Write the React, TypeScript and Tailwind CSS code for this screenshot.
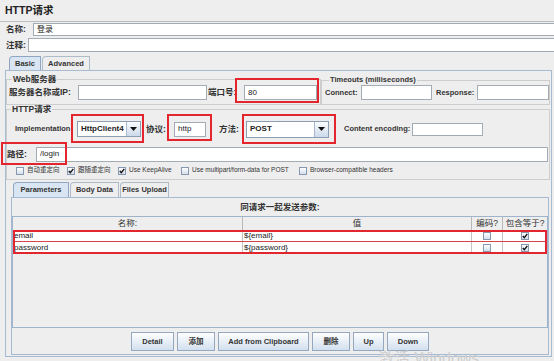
import React from "react";

type Kids = { className?: string; children?: React.ReactNode };

// red annotation frame drawn over a control
function Red({ className = "" }: { className?: string }) {
  return <span className={`pointer-events-none absolute border-2 border-[#e3262d] ${className}`} />;
}

function Input({ className = "", children }: Kids) {
  return (
    <div
      className={`flex items-center border border-[#a3abb5] bg-white px-[3px] text-[8px] leading-none text-[#222] ${className}`}
    >
      {children}
    </div>
  );
}

function Combo({ value, className = "" }: { value: string; className?: string }) {
  return (
    <div className={`flex border border-[#8d9db3] bg-white ${className}`}>
      <div className="flex flex-1 items-center pl-[3px] text-[8px] font-bold leading-none text-[#222]">{value}</div>
      <div className="flex w-[14px] items-center justify-center border-l border-[#a9b8ca] bg-linear-to-b from-[#fbfdff] to-[#ccdaea]">
        <svg width="7" height="4" viewBox="0 0 7 4">
          <path d="M0 0h7L3.5 4z" fill="#111" />
        </svg>
      </div>
    </div>
  );
}

function Box({ checked }: { checked?: boolean }) {
  return (
    <span className="flex h-[8px] w-[8px] shrink-0 items-center justify-center border border-[#8797ad] bg-linear-to-b from-[#ffffff] to-[#d3dfec]">
      {checked && (
        <svg width="6" height="6" viewBox="0 0 6 6">
          <path d="M0.8 3.1 L2.3 4.7 L5.3 0.9" stroke="#111" strokeWidth="1.4" fill="none" />
        </svg>
      )}
    </span>
  );
}

function Check({ label, checked, className = "" }: { label: string; checked?: boolean; className?: string }) {
  return (
    <div className={`flex items-center gap-[3px] ${className}`}>
      <Box checked={checked} />
      <span className="text-[6.5px] leading-none text-[#333]">{label}</span>
    </div>
  );
}

function Tab({ label, active, className = "" }: { label: string; active?: boolean; className?: string }) {
  return (
    <div
      className={`flex h-full items-center justify-center rounded-tl-[4px] border border-b-0 text-[7.5px] font-bold leading-none text-[#333] ${
        active ? "border-[#8ea6c1] bg-[#d9e5f2]" : "border-[#aebbc9] bg-[#eeeeee]"
      } ${className}`}
    >
      {label}
    </div>
  );
}

function Btn({ label, className = "" }: { label: string; className?: string }) {
  return (
    <div
      className={`flex h-[19px] items-center justify-center border border-[#96a8bf] bg-linear-to-b from-[#fdfeff] to-[#d3e0ee] text-[7.5px] font-bold leading-none text-[#333] ${className}`}
    >
      {label}
    </div>
  );
}

const rows = [
  { name: "email", value: "${email}" },
  { name: "password", value: "${password}" },
];

export default function App() {
  return (
    <div className="relative h-[361px] w-[554px] overflow-hidden bg-[#eeeeee] font-[family-name:'Liberation_Sans','Noto_Sans_CJK_SC',sans-serif] text-[#333]">
      <div className="h-[22px] border-b border-[#bdbdbd] pl-[5px] pt-[4px] text-[10.5px] font-bold leading-[12px] text-[#222]">
        HTTP请求
      </div>

      <div className="mt-[1px] flex h-[13px]">
        <div className="w-[33px] pl-[6px] text-[8.5px] font-bold leading-[13px]">名称:</div>
        <Input className="flex-1 border-r-0">登录</Input>
      </div>
      <div className="mt-[2px] flex h-[14px]">
        <div className="w-[28px] pl-[6px] text-[8.5px] font-bold leading-[14px]">注释:</div>
        <Input className="flex-1 border-r-0" />
      </div>

      <div className="mt-[4px] flex h-[14px] pl-[9px]">
        <Tab label="Basic" active className="w-[32px]" />
        <Tab label="Advanced" className="ml-px w-[48px]" />
      </div>

      <div className="ml-[5px] h-[287px] w-[547px] border border-[#a6bbd2]">
        {/* web server + timeouts */}
        <div className="mt-[4px] flex">
          <fieldset className="h-[30px] w-[315px] border border-[#cdcdcd] pl-[2px]">
            <legend className="ml-[3px] px-[1px] text-[8.5px] font-bold leading-[9px]">Web服务器</legend>
            <div className="mt-[1px] flex h-[15px] items-center">
              <div className="w-[69px] text-[8.5px] font-bold leading-none">服务器名称或IP:</div>
              <Input className="h-[15px] w-[129px]" />
              <div className="ml-px w-[36px] text-[8.5px] font-bold leading-none">端口号:</div>
              <div className="relative">
                <Input className="h-[15px] w-[73px]">80</Input>
                <Red className="-top-[7px] -bottom-[3px] -left-[9px] -right-[2px]" />
              </div>
            </div>
          </fieldset>
          <fieldset className="mt-px h-[29px] w-[229px] border border-[#cdcdcd] pl-[3px]">
            <legend className="ml-[4px] px-[1px] text-[7.5px] font-bold leading-[8px]">Timeouts (milliseconds)</legend>
            <div className="mt-[1px] flex h-[15px] items-center">
              <div className="w-[36px] text-[7.5px] font-bold leading-none">Connect:</div>
              <Input className="h-[15px] w-[71px]" />
              <div className="ml-[4px] w-[41px] text-[7.5px] font-bold leading-none">Response:</div>
              <Input className="h-[15px] w-[72px]" />
            </div>
          </fieldset>
        </div>

        {/* HTTP request group */}
        <fieldset className="w-[544px] border border-[#cdcdcd] pb-[2px]">
          <legend className="ml-[4px] px-[1px] text-[8.5px] font-bold leading-[9px]">HTTP请求</legend>
          <div className="flex h-[30px] items-center pl-[8px]">
            <div className="w-[62px] text-[7.5px] font-bold leading-none">Implementation</div>
            <div className="relative">
              <Combo value="HttpClient4" className="h-[16px] w-[64px]" />
              <Red className="-top-[7px] -bottom-[6px] -left-[6px] -right-[3px]" />
            </div>
            <div className="ml-[5px] w-[28px] text-[8.5px] font-bold leading-none">协议:</div>
            <div className="relative">
              <Input className="h-[15px] w-[32px]">http</Input>
              <Red className="-top-[8px] -bottom-[4px] -left-[7px] -right-[6px]" />
            </div>
            <div className="ml-[13px] w-[27px] text-[8.5px] font-bold leading-none">方法:</div>
            <div className="relative">
              <Combo value="POST" className="h-[17px] w-[83px]" />
              <Red className="-top-[7px] -bottom-[6px] -left-[4px] -right-[7px]" />
            </div>
            <div className="ml-[15px] w-[68px] text-[7.5px] font-bold leading-none">Content encoding:</div>
            <Input className="h-[13px] w-[71px]" />
          </div>

          <div className="relative flex h-[20px] items-center">
            <div className="w-[29px] text-[8.5px] font-bold leading-none">路径:</div>
            <Input className="mr-px h-[15px] flex-1">/login</Input>
            <Red className="-left-[6px] -top-[2px] h-[23px] w-[66px]" />
          </div>

          <div className="flex h-[13px] items-center pl-[9px]">
            <Check label="自动重定向" className="w-[51px]" />
            <Check label="跟随重定向" checked className="w-[51px]" />
            <Check label="Use KeepAlive" checked className="w-[63px]" />
            <Check label="Use multipart/form-data for POST" className="w-[118px]" />
            <Check label="Browser-compatible headers" />
          </div>
        </fieldset>

        {/* sub tabs */}
        <div className="ml-[7px] mt-[2px] flex h-[15px]">
          <Tab label="Parameters" active className="w-[56px]" />
          <Tab label="Body Data" className="ml-px w-[49px]" />
          <Tab label="Files Upload" className="ml-px w-[49px]" />
        </div>

        <div className="ml-[5px] h-[158px] w-[538px] border border-[#a6bbd2]">
          <div className="flex h-[18px] items-center justify-center text-[8.5px] font-bold leading-none">
            同请求一起发送参数:
          </div>

          <div className="h-[112px] border border-[#9fb4cc]">
            <div className="grid h-[14px] grid-cols-[230px_229px_31px_1fr] border-b border-[#b8b8b8] text-[8.5px] leading-none">
              <div className="flex items-center justify-center border-r border-[#b8b8b8]">名称:</div>
              <div className="flex items-center justify-center border-r border-[#b8b8b8]">值</div>
              <div className="flex items-center justify-center border-r border-[#b8b8b8]">编码?</div>
              <div className="flex items-center justify-center">包含等于?</div>
            </div>
            <div className="relative">
              {rows.map((r, i) => (
                <div
                  key={r.name}
                  className={`grid h-[11px] grid-cols-[230px_229px_31px_1fr] bg-white text-[8px] leading-none text-[#222] ${
                    i === 0 ? "border-b border-[#d9434e]" : ""
                  }`}
                >
                  <div className="flex items-center border-r border-[#c4c4c4] pl-px">{r.name}</div>
                  <div className="flex items-center border-r border-[#c4c4c4] pl-px">{r.value}</div>
                  <div className="flex items-center justify-center border-r border-[#c4c4c4]">
                    <Box />
                  </div>
                  <div className="flex items-center justify-center">
                    <Box checked />
                  </div>
                </div>
              ))}
              <Red className="-top-[1px] -bottom-[1px] left-0 right-0 border-[#d9434e]" />
            </div>
          </div>

          <div className="flex justify-center gap-[3px] pt-[4px]">
            <Btn label="Detail" className="w-[43px]" />
            <Btn label="添加" className="w-[38px]" />
            <Btn label="Add from Clipboard" className="w-[91px]" />
            <Btn label="删除" className="w-[38px]" />
            <Btn label="Up" className="w-[31px]" />
            <Btn label="Down" className="w-[42px]" />
          </div>
        </div>
      </div>

      <div className="absolute left-[378px] top-[351px] text-[16px] leading-[16px] text-[#cfcfcf]">激活 Windows</div>
    </div>
  );
}
